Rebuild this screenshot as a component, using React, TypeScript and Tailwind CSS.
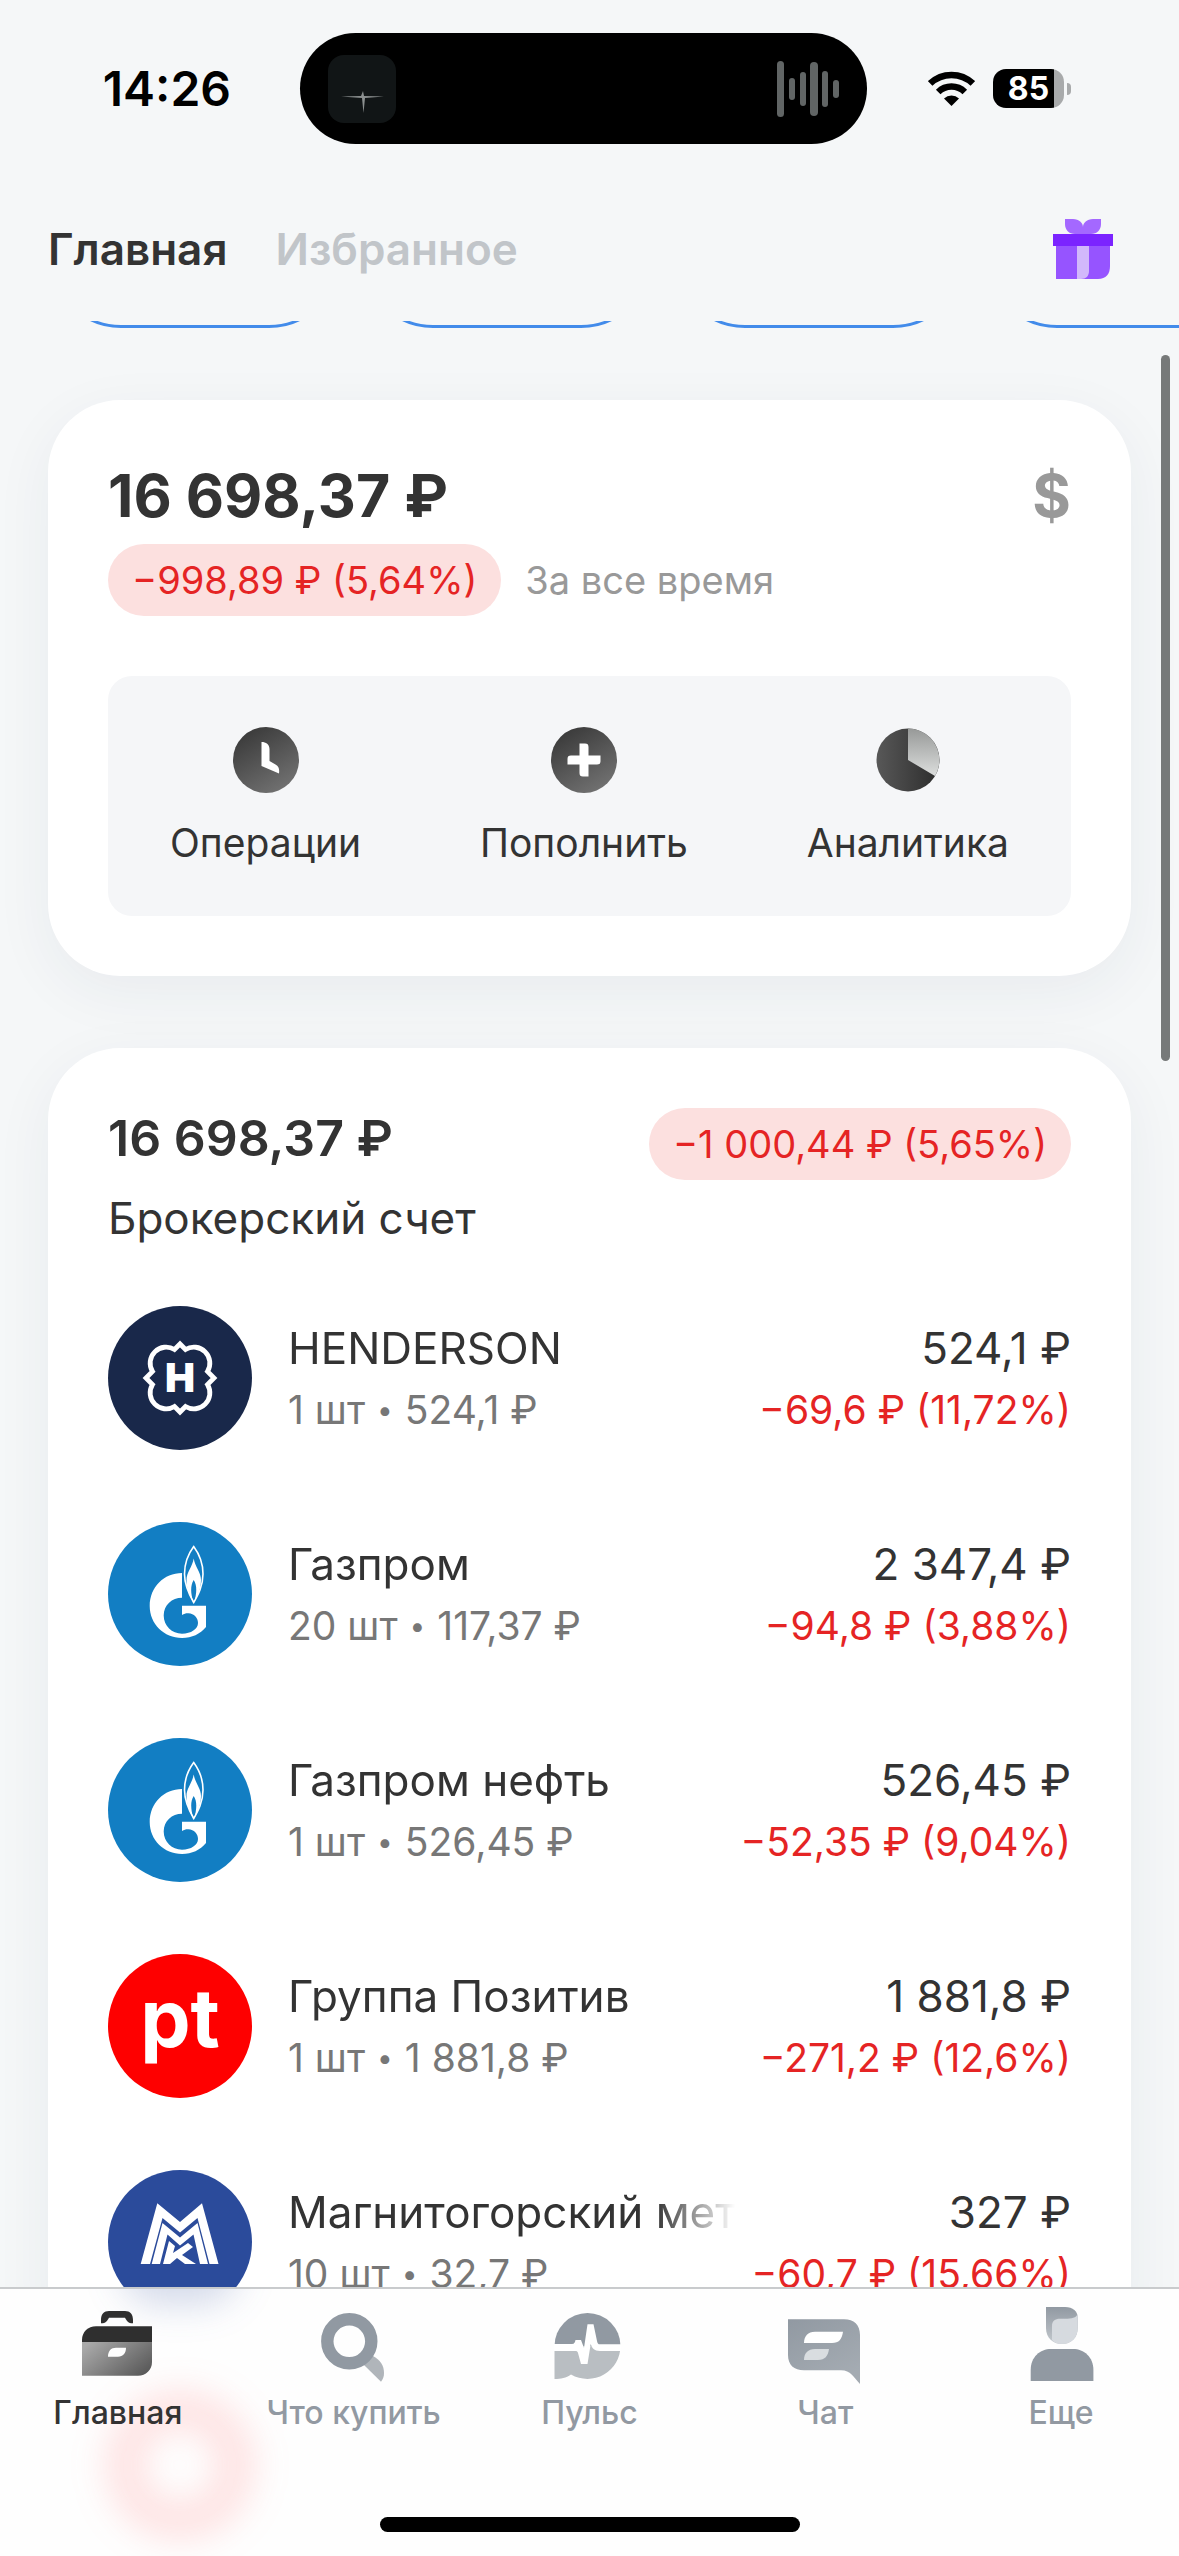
import React from "react";

type Position = {
  name: string;
  amount: string;
  price: string;
  total: string;
  change: string;
  logo: React.ReactNode;
};

function GazpromLogo() {
  return (
    <svg viewBox="0 0 144 144" className="size-36" aria-hidden="true">
      <circle cx="72" cy="72" r="72" fill="#127ec3" />
      <path
        fill="#fff"
        d="M74 51C56 51 41.700 65 41.700 84C41.700 102 56 116 74 116C84 116 92 112 98 105V83.700H74V93C76.500 91.300 79 91 80.500 91.300C86 91.500 90 96 90 101C90 107 83 111.700 74 111.700C64 111.700 55.700 104 55.700 93.500C55.700 83 64 75.700 74 75.700Z"
      />
      <path
        fill="#127ec3"
        stroke="#fff"
        strokeWidth="1.6"
        d="M85.700 24.500C92 33 95 43 95 52C95 64 90 73 85.700 80.500C81.400 73 76.500 64 76.500 52C76.500 43 79.400 33 85.700 24.500Z"
      />
      <path
        fill="#fff"
        d="M85.700 36.500C87 45 93 50 93 58C93 68 89 74 86.500 80C88.500 71 89.500 64 85.700 58C82 64 83 71 85 80C82 74 78.500 68 78.500 58C78.500 50 84.400 45 85.700 36.500Z"
      />
    </svg>
  );
}

function HendersonLogo() {
  return (
    <svg viewBox="0 0 144 144" className="size-36" aria-hidden="true">
      <circle cx="72" cy="72" r="72" fill="#19284a" />
      <path
        fill="none"
        stroke="#fff"
        strokeWidth="4.8"
        d="M72 38L66.500 43.500A16 16 0 0 0 44.500 65.500L38 72L44.500 78.500A16 16 0 0 0 66.500 100.500L72 106L77.500 100.500A16 16 0 0 0 99.500 78.500L106 72L99.500 65.500A16 16 0 0 0 77.500 43.500Z"
      />
      <text
        x="72"
        y="86"
        textAnchor="middle"
        className="fill-white font-['Inter',sans-serif] text-[40px] font-black"
      >
        H
      </text>
    </svg>
  );
}

function PositiveLogo() {
  return (
    <svg viewBox="0 0 144 144" className="size-36" aria-hidden="true">
      <circle cx="72" cy="72" r="72" fill="#fe0000" />
      <text
        x="72"
        y="93"
        textAnchor="middle"
        className="fill-white font-['Inter',sans-serif] text-[80px] font-bold"
      >
        pt
      </text>
    </svg>
  );
}

function MmkLogo() {
  return (
    <svg viewBox="0 0 144 144" className="size-36" aria-hidden="true">
      <circle cx="72" cy="72" r="72" fill="#2b4b9b" />
      <g fill="#fff">
        <path d="M32.700 94L49.300 33.300L72 52L94 33.300L110.500 94H101.500L89.500 48L72 62.500L54.500 48L42 94Z" />
        <path d="M43.700 94L54.500 53L72 67.500L89.500 53L100 94H92L85.500 64.500L72 75.500L59.500 64.500L52 94Z" />
        <path d="M55 94L61 71L67 76L65 83L80 73L85 77L74 85L88 94H77L69 88L62 94Z" />
      </g>
    </svg>
  );
}

const positions: Position[] = [
  {
    name: "HENDERSON",
    amount: "1 шт",
    price: "524,1 ₽",
    total: "524,1 ₽",
    change: "−69,6 ₽ (11,72%)",
    logo: <HendersonLogo />,
  },
  {
    name: "Газпром",
    amount: "20 шт",
    price: "117,37 ₽",
    total: "2 347,4 ₽",
    change: "−94,8 ₽ (3,88%)",
    logo: <GazpromLogo />,
  },
  {
    name: "Газпром нефть",
    amount: "1 шт",
    price: "526,45 ₽",
    total: "526,45 ₽",
    change: "−52,35 ₽ (9,04%)",
    logo: <GazpromLogo />,
  },
  {
    name: "Группа Позитив",
    amount: "1 шт",
    price: "1 881,8 ₽",
    total: "1 881,8 ₽",
    change: "−271,2 ₽ (12,6%)",
    logo: <PositiveLogo />,
  },
  {
    name: "Магнитогорский мет",
    amount: "10 шт",
    price: "32,7 ₽",
    total: "327 ₽",
    change: "−60,7 ₽ (15,66%)",
    logo: <MmkLogo />,
  },
];

const actions = [
  {
    label: "Операции",
    icon: (
      <svg viewBox="0 0 66 66" className="size-[66px]" aria-hidden="true">
        <circle cx="33" cy="33" r="33" fill="url(#dark)" />
        <path
          fill="#fff"
          d="M28.500 15C33 15 36.500 17.500 36.500 22V34L42.500 37.500C46 39.500 46.500 42 46 46.500L28.500 39Z"
        />
      </svg>
    ),
  },
  {
    label: "Пополнить",
    icon: (
      <svg viewBox="0 0 66 66" className="size-[66px]" aria-hidden="true">
        <circle cx="33" cy="33" r="33" fill="url(#dark)" />
        <path
          fill="#fff"
          d="M28.500 16.500H34C36.500 16.500 37.500 17.500 37.500 20V28.500H49.500V34C49.500 36.500 48.500 37.500 46 37.500H37.500V49.500H32C29.500 49.500 28.500 48.500 28.500 46V37.500H16.500V32C16.500 29.500 17.500 28.500 20 28.500H28.500Z"
        />
      </svg>
    ),
  },
  {
    label: "Аналитика",
    icon: (
      <svg viewBox="0 0 66 66" className="size-[66px]" aria-hidden="true">
        <circle cx="33" cy="33" r="31.500" fill="url(#pie)" />
        <path fill="url(#slice)" d="M33 33V1.500A31.500 31.500 0 0 1 60 49Z" />
      </svg>
    ),
  },
];

const tabs = [
  {
    label: "Главная",
    active: true,
    icon: (
      <svg viewBox="0 0 84 84" className="size-21" aria-hidden="true">
        <g fill="#2f2f2f">
          <path d="M25 19.300V16C25 10 28 7 33 7H49C54 7 57 10 57 16V19.300C52 19.300 51 17 49 13.700H33C31 17 30 19.300 25 19.300Z" />
          <path d="M6 38V36C6 28 12 22.300 20 22.300H76V38Z" />
        </g>
        <path
          fill="url(#case)"
          fillRule="evenodd"
          d="M6 38H76V58C76 66 70 71.700 62 71.700H6ZM32 52.700H42C47 52.700 50 49 50 43.700H40C35 43.700 32 47 32 52.700Z"
        />
      </svg>
    ),
  },
  {
    label: "Что купить",
    icon: (
      <svg viewBox="0 0 84 84" className="size-21" aria-hidden="true">
        <path
          fill="#b0b5ba"
          d="M61 52C68 56 72 61 72 69C72 73 71 75 69 77.700L52 61Z"
        />
        <circle
          cx="37.300"
          cy="37.300"
          r="22"
          fill="none"
          stroke="#9199a2"
          strokeWidth="12.400"
        />
      </svg>
    ),
  },
  {
    label: "Пульс",
    icon: (
      <svg viewBox="0 0 84 84" className="size-21" aria-hidden="true">
        <path fill="#9199a2" d="M7.500 42A33 33 0 0 1 73.500 42Z" />
        <path
          fill="#b9bec2"
          d="M7.500 42H73.500A33 33 0 0 1 24 70.500C19 74 14 75 7.500 75Z"
        />
        <path
          fill="#fff"
          d="M7 40H25C27.500 40 28 38 28.500 36H34L37 44L40.500 20.300H46.500L50 37C50.500 39.500 51 40.300 53 40.300H74V47H53C47 47 45 44 43.700 40L40.500 60H34L31 49C30.600 47.500 30 47 28 47H7Z"
        />
      </svg>
    ),
  },
  {
    label: "Чат",
    icon: (
      <svg viewBox="0 0 84 84" className="size-21" aria-hidden="true">
        <path
          fill="url(#chat)"
          d="M5 15.300H61C71 15.300 77 21 77 31V80C70 73 68 66.300 58 66.300H21C11 66.300 5 61 5 51Z"
        />
        <path
          fill="#fff"
          d="M21 39C21 32 25 27.700 32 27.700H60C59 35 56 39 49 39Z"
        />
        <path
          fill="#d9dde0"
          d="M21 56C21 49 25 45 32 45H46C45 52 42 56 35 56Z"
        />
      </svg>
    ),
  },
  {
    label: "Еще",
    icon: (
      <svg viewBox="0 0 84 84" className="size-21" aria-hidden="true">
        <path
          fill="url(#head)"
          d="M27 3H46C54 3 58.700 7 58.700 14V24C58.700 34 52 40 43 40C34 40 27 34 27 24Z"
        />
        <path
          fill="#d6dadf"
          d="M33 36V22C33 17 36 14.700 41 14.700H46C53 14.700 57 14 58.700 10V24C58.700 34 52 40 43 40C39 40 36 39 33 36Z"
        />
        <path
          fill="#9199a2"
          d="M11.700 77V66C11.700 53 21 45 32 45H54C65 45 74.400 53 74.400 66V77Z"
        />
      </svg>
    ),
  },
];

// Shared gradients, referenced by id from the icons
function Gradients() {
  return (
    <svg width="0" height="0" className="absolute" aria-hidden="true">
      <defs>
        <linearGradient id="dark" x1="0.2" y1="0" x2="0.8" y2="1">
          <stop offset="0" stopColor="#383838" />
          <stop offset="1" stopColor="#747474" />
        </linearGradient>
        <linearGradient id="pie">
          <stop offset="0" stopColor="#585858" />
          <stop offset="1" stopColor="#2c2c2c" />
        </linearGradient>
        <linearGradient id="slice" x1="0" y1="0" x2="0" y2="1">
          <stop offset="0" stopColor="#979998" />
          <stop offset="1" stopColor="#dcdedd" />
        </linearGradient>
        <linearGradient id="case" x1="0" y1="0.2" x2="1" y2="0.8">
          <stop offset="0" stopColor="#a9a9a9" />
          <stop offset="1" stopColor="#595959" />
        </linearGradient>
        <linearGradient id="chat" x1="0" y1="0" x2="0.6" y2="1">
          <stop offset="0" stopColor="#9199a2" />
          <stop offset="1" stopColor="#a4abb2" />
        </linearGradient>
        <linearGradient id="head" x1="0" y1="0" x2="0" y2="1">
          <stop offset="0" stopColor="#9199a2" />
          <stop offset="1" stopColor="#c3c8cd" />
        </linearGradient>
      </defs>
    </svg>
  );
}

function StatusBar() {
  return (
    <div className="grid grid-cols-[1fr_auto_1fr] items-center pt-[33px] pr-3">
      <div className="pr-[69px] text-right text-[48px] leading-none font-semibold text-black">
        14:26
      </div>
      <div className="flex h-[111px] w-[567px] items-center justify-between rounded-full bg-black pr-7 pl-7">
        <svg viewBox="0 0 68 68" className="size-17" aria-hidden="true">
          <rect width="68" height="68" rx="16" fill="#111516" />
          <path
            fill="#8b8f8f"
            d="M13 41.500L33 41L35 36L36 41L56 41.500L37 43L35.500 58L34 43Z"
          />
        </svg>
        <svg
          viewBox="0 0 62 56"
          className="h-14 w-[62px]"
          fill="#616565"
          aria-hidden="true"
        >
          <rect x="0" y="0" width="7" height="56" rx="3.500" />
          <rect x="12" y="17" width="6" height="22" rx="3" />
          <rect x="23" y="11" width="6" height="34" rx="3" />
          <rect x="33" y="1" width="8" height="54" rx="4" />
          <rect x="45" y="10" width="6" height="36" rx="3" />
          <rect x="56" y="19" width="6" height="18" rx="3" />
        </svg>
      </div>
      <div className="flex items-center gap-[18px] pl-[61px]">
        <svg viewBox="0 0 47 35" className="h-[35px] w-[47px]" aria-hidden="true">
          <g fill="none" stroke="#000" strokeWidth="6.500">
            <path d="M2.200 12.500A31 31 0 0 1 44.800 12.500" />
            <path d="M10.200 21A19 19 0 0 1 36.800 21" />
          </g>
          <path d="M16 27.500A11 11 0 0 1 31 27.500L23.500 35Z" />
        </svg>
        <div className="flex items-center gap-[3px]">
          <div className="flex h-[39px] w-[71px] items-center justify-center rounded-[13px] bg-linear-to-r from-black from-86% to-[#a8aaab] to-86% text-[32px] font-bold text-white">
            85
          </div>
          <div className="h-3 w-1 rounded-r-full bg-[#a8aaab]" />
        </div>
      </div>
    </div>
  );
}

function Header() {
  return (
    <header className="flex items-center justify-between px-12 pr-[66px] pt-[75px] pb-[42px]">
      <nav className="flex gap-12 text-[44px] leading-[60px] font-semibold">
        <a href="#main" className="text-[#333]">
          Главная
        </a>
        <a href="#favorites" className="text-[#c1c5c9]">
          Избранное
        </a>
      </nav>
      <button type="button" aria-label="Подарки">
        <svg viewBox="0 0 60 60" className="size-15" aria-hidden="true">
          <path
            fill="#a468ff"
            d="M12 0H20C26 0 30 4 30 8C30 4 34 0 40 0H48V5C48 11 44 15 38 15H22C16 15 12 11 12 5Z"
          />
          <path fill="#9654ff" d="M3 27H57V47C57 55 53 60 45 60H3Z" />
          <path fill="#d2b8fb" d="M24 27H36V52C36 57 33 60 28 60H24Z" />
          <path fill="#7b24ff" d="M0 15H60V27H0Z" />
        </svg>
      </button>
    </header>
  );
}

function ChangePill({ children }: { children: React.ReactNode }) {
  return (
    <span className="rounded-full bg-[#fce0df] px-6 text-[38px] leading-[72px] whitespace-nowrap text-[#e52424]">
      {children}
    </span>
  );
}

function Summary() {
  return (
    <section className="rounded-[72px] bg-white px-15 pt-15 pb-15 shadow-[0_16px_60px_rgba(30,50,80,0.06)]">
      <div className="flex items-center justify-between text-[59px] leading-[72px] font-bold">
        <h1 className="text-[#333]">16 698,37 ₽</h1>
        <button type="button" className="text-[#999]">
          $
        </button>
      </div>
      <div className="mt-3 flex items-center gap-6">
        <ChangePill>−998,89 ₽ (5,64%)</ChangePill>
        <span className="text-[38px] text-[#999]">За все время</span>
      </div>
      <div className="mt-15 flex h-60 items-center justify-between rounded-3xl bg-[#f5f6f8] px-[62px] pt-1">
        {actions.map((action) => (
          <button
            key={action.label}
            type="button"
            className="flex flex-col items-center gap-6 text-[39px] leading-[52px] text-[#333]"
          >
            {action.icon}
            {action.label}
          </button>
        ))}
      </div>
    </section>
  );
}

function PositionRow({ position }: { position: Position }) {
  return (
    <li className="flex h-36 items-center">
      <div className="mr-9 shrink-0">{position.logo}</div>
      <div className="mr-4 min-w-0 flex-1 pt-1">
        <div className="overflow-hidden mask-r-from-[calc(100%-80px)] text-[44px] leading-[60px] whitespace-nowrap text-[#333]">
          {position.name}
        </div>
        <div className="flex items-center gap-3 text-[39px] leading-[64px] whitespace-nowrap text-[#777]">
          <span>{position.amount}</span>
          <span className="text-[28px]">•</span>
          <span>{position.price}</span>
        </div>
      </div>
      <div className="shrink-0 pt-1 text-right whitespace-nowrap">
        <div className="text-[44px] leading-[60px] text-[#333]">
          {position.total}
        </div>
        <div className="text-[39px] leading-[64px] text-[#e52424]">
          {position.change}
        </div>
      </div>
    </li>
  );
}

function Account() {
  return (
    <section className="rounded-[72px] bg-white px-15 pt-15 pb-15 shadow-[0_16px_60px_rgba(30,50,80,0.06)]">
      <div className="flex items-start justify-between">
        <div>
          <h2 className="text-[50px] leading-[60px] font-semibold text-[#333]">
            16 698,37 ₽
          </h2>
          <p className="mt-5 text-[44px] leading-[60px] text-[#333]">
            Брокерский счет
          </p>
        </div>
        <ChangePill>−1 000,44 ₽ (5,65%)</ChangePill>
      </div>
      <ul className="mt-[58px] flex flex-col gap-18">
        {positions.map((position) => (
          <PositionRow key={position.name} position={position} />
        ))}
      </ul>
    </section>
  );
}

function TabBar() {
  return (
    <nav className="relative shrink-0 overflow-hidden border-t-2 border-[#c9cbcd] bg-[#fefefe] pt-[15px] pb-6">
      <div className="absolute top-26 left-[108px] size-36 rounded-full border-[32px] border-[#ff5a5a]/20 blur-[18px]" />
      <div className="absolute -top-16 left-[120px] h-20 w-30 rounded-full bg-[#2b4b9b]/20 blur-[18px]" />
      <ul className="relative grid grid-cols-5">
        {tabs.map((tab) => (
          <li key={tab.label}>
            <a
              href="#"
              className={`flex flex-col items-center gap-[3px] text-[32px] leading-[44px] font-medium whitespace-nowrap ${
                tab.active ? "text-[#333]" : "text-[#9299a2]"
              }`}
            >
              {tab.icon}
              {tab.label}
            </a>
          </li>
        ))}
      </ul>
      <div className="relative mx-auto mt-[82px] h-[15px] w-[420px] rounded-full bg-black" />
    </nav>
  );
}

export default function App() {
  return (
    <div className="flex h-screen flex-col overflow-hidden bg-[#f5f7f8] font-['Inter','Liberation_Sans',sans-serif]">
      <Gradients />
      <StatusBar />
      <Header />
      <main className="relative min-h-0 flex-1 overflow-hidden">
        {/* Stories, scrolled almost out of view */}
        <div className="flex h-[7px] items-end gap-6 overflow-hidden px-[51px]">
          {[1, 2, 3, 4].map((story) => (
            <div
              key={story}
              className="h-72 w-72 shrink-0 rounded-[70px] border-3 border-[#428bea]"
            />
          ))}
        </div>
        <div className="mt-[72px] flex flex-col gap-18 px-12">
          <Summary />
          <Account />
        </div>
        <div className="absolute top-[34px] right-[9px] h-[706px] w-[9px] rounded-full bg-[#767979]" />
      </main>
      <TabBar />
    </div>
  );
}
